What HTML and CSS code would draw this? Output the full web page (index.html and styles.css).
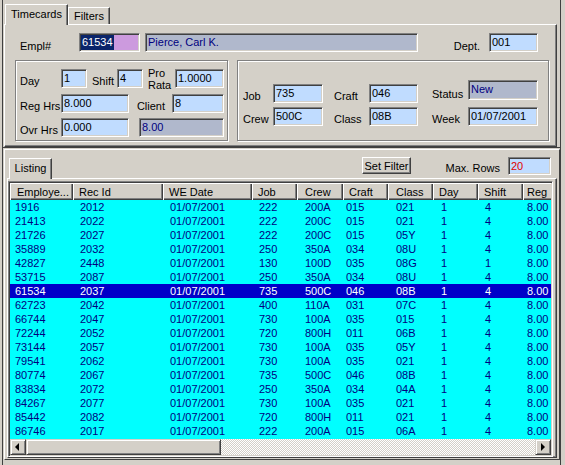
FILE: index.html
```html
<!DOCTYPE html>
<html lang="en">
<head>
    <meta charset="UTF-8">
    <title>Timecards</title>
    <link rel="stylesheet" href="styles.css">
</head>
<body>
<div class="wrap">
    <div class="top">
        <div class="tabctl tabctl-top">
            <div class="tabstrip">
                <div class="tab active tab-timecards">Timecards</div>
                <div class="tab tab-filters">Filters</div>
            </div>
            <div class="page page-main">
                <div class="frow row-emp">
                    <span class="lbl lbl-emp">Empl#</span>
                    <div class="fld fld-purple w61"><span class="seltext">61534</span></div>
                    <div class="fld fld-grey w273 ml5">Pierce, Carl K.</div>
                    <span class="lbl lbl-dept">Dept.</span>
                    <div class="fld w49">001</div>
                </div>
                <div class="groups">
                    <div class="group group-left">
                        <div class="frow">
                            <span class="lbl w41">Day</span>
                            <div class="fld w26">1</div>
                            <span class="lbl w30 pl5">Shift</span>
                            <div class="fld w26">4</div>
                            <span class="lbl lbl-two w32 pl5">Pro<br>Rata</span>
                            <div class="fld w49">1.0000</div>
                        </div>
                        <div class="frow mt6">
                            <span class="lbl w41">Reg Hrs</span>
                            <div class="fld w68">8.000</div>
                            <span class="lbl lbl-client">Client</span>
                            <div class="fld w52">8</div>
                        </div>
                        <div class="frow mt5">
                            <span class="lbl w41">Ovr Hrs</span>
                            <div class="fld w68">0.000</div>
                            <div class="fld fld-grey w85 ml10">8.00</div>
                        </div>
                    </div>
                    <div class="group group-right">
                        <div class="frow">
                            <span class="lbl w30">Job</span>
                            <div class="fld w50">735</div>
                            <span class="lbl w46 pl11">Craft</span>
                            <div class="fld w49">046</div>
                            <span class="lbl lbl-status w50 pl14">Status</span>
                            <div class="fld fld-grey fld-status w70">New</div>
                        </div>
                        <div class="frow mt4">
                            <span class="lbl w30">Crew</span>
                            <div class="fld w50">500C</div>
                            <span class="lbl w46 pl11">Class</span>
                            <div class="fld w49">08B</div>
                            <span class="lbl w50 pl14">Week</span>
                            <div class="fld w70">01/07/2001</div>
                        </div>
                    </div>
                </div>
            </div>
        </div>
    </div>

    <div class="bottom">
        <div class="tabctl tabctl-list">
            <div class="tabstrip-list">
                <div class="tab active tab-listing">Listing</div>
                <div class="btn btn-filter">Set Filter</div>
                <span class="lbl lbl-max">Max. Rows</span>
                <div class="fld fld-max">20</div>
            </div>
            <div class="page page-list">
                <div class="grid">
                    <div class="grid-view">
                        <table>
                            <colgroup>
                                <col style="width:63px"><col style="width:90px"><col style="width:89px">
                                <col style="width:45px"><col style="width:46px"><col style="width:45px">
                                <col style="width:45px"><col style="width:45px"><col style="width:45px">
                                <col style="width:60px">
                            </colgroup>
                            <thead>
                                <tr>
                                    <th>Employe...</th><th>Rec Id</th><th>WE Date</th><th>Job</th><th class="c-crew">Crew</th>
                                    <th>Craft</th><th class="c-crew">Class</th><th>Day</th><th>Shift</th><th class="c-reg">Reg</th>
                                </tr>
                            </thead>
                            <tbody>
                                <tr><td class="c-emp">1916</td><td>2012</td><td>01/07/2001</td><td>222</td><td class="c-crew">200A</td><td class="c-craft">015</td><td class="c-crew">021</td><td class="c-crew">1</td><td>4</td><td class="c-reg">8.00</td></tr>
                                <tr><td class="c-emp">21413</td><td>2022</td><td>01/07/2001</td><td>222</td><td class="c-crew">200C</td><td class="c-craft">015</td><td class="c-crew">021</td><td class="c-crew">1</td><td>4</td><td class="c-reg">8.00</td></tr>
                                <tr><td class="c-emp">21726</td><td>2027</td><td>01/07/2001</td><td>222</td><td class="c-crew">200C</td><td class="c-craft">015</td><td class="c-crew">05Y</td><td class="c-crew">1</td><td>4</td><td class="c-reg">8.00</td></tr>
                                <tr><td class="c-emp">35889</td><td>2032</td><td>01/07/2001</td><td>250</td><td class="c-crew">350A</td><td class="c-craft">034</td><td class="c-crew">08U</td><td class="c-crew">1</td><td>4</td><td class="c-reg">8.00</td></tr>
                                <tr><td class="c-emp">42827</td><td>2448</td><td>01/07/2001</td><td>130</td><td class="c-crew">100D</td><td class="c-craft">035</td><td class="c-crew">08G</td><td class="c-crew">1</td><td>1</td><td class="c-reg">8.00</td></tr>
                                <tr><td class="c-emp">53715</td><td>2087</td><td>01/07/2001</td><td>250</td><td class="c-crew">350A</td><td class="c-craft">034</td><td class="c-crew">08U</td><td class="c-crew">1</td><td>4</td><td class="c-reg">8.00</td></tr>
                                <tr class="sel"><td class="c-emp">61534</td><td>2037</td><td>01/07/2001</td><td>735</td><td class="c-crew">500C</td><td class="c-craft">046</td><td class="c-crew">08B</td><td class="c-crew">1</td><td>4</td><td class="c-reg">8.00</td></tr>
                                <tr><td class="c-emp">62723</td><td>2042</td><td>01/07/2001</td><td>400</td><td class="c-crew">110A</td><td class="c-craft">031</td><td class="c-crew">07C</td><td class="c-crew">1</td><td>4</td><td class="c-reg">8.00</td></tr>
                                <tr><td class="c-emp">66744</td><td>2047</td><td>01/07/2001</td><td>730</td><td class="c-crew">100A</td><td class="c-craft">035</td><td class="c-crew">015</td><td class="c-crew">1</td><td>4</td><td class="c-reg">8.00</td></tr>
                                <tr><td class="c-emp">72244</td><td>2052</td><td>01/07/2001</td><td>720</td><td class="c-crew">800H</td><td class="c-craft">011</td><td class="c-crew">06B</td><td class="c-crew">1</td><td>4</td><td class="c-reg">8.00</td></tr>
                                <tr><td class="c-emp">73144</td><td>2057</td><td>01/07/2001</td><td>730</td><td class="c-crew">100A</td><td class="c-craft">035</td><td class="c-crew">05Y</td><td class="c-crew">1</td><td>4</td><td class="c-reg">8.00</td></tr>
                                <tr><td class="c-emp">79541</td><td>2062</td><td>01/07/2001</td><td>730</td><td class="c-crew">100A</td><td class="c-craft">035</td><td class="c-crew">021</td><td class="c-crew">1</td><td>4</td><td class="c-reg">8.00</td></tr>
                                <tr><td class="c-emp">80774</td><td>2067</td><td>01/07/2001</td><td>735</td><td class="c-crew">500C</td><td class="c-craft">046</td><td class="c-crew">08B</td><td class="c-crew">1</td><td>4</td><td class="c-reg">8.00</td></tr>
                                <tr><td class="c-emp">83834</td><td>2072</td><td>01/07/2001</td><td>250</td><td class="c-crew">350A</td><td class="c-craft">034</td><td class="c-crew">04A</td><td class="c-crew">1</td><td>4</td><td class="c-reg">8.00</td></tr>
                                <tr><td class="c-emp">84267</td><td>2077</td><td>01/07/2001</td><td>730</td><td class="c-crew">100A</td><td class="c-craft">035</td><td class="c-crew">021</td><td class="c-crew">1</td><td>4</td><td class="c-reg">8.00</td></tr>
                                <tr><td class="c-emp">85442</td><td>2082</td><td>01/07/2001</td><td>720</td><td class="c-crew">800H</td><td class="c-craft">011</td><td class="c-crew">021</td><td class="c-crew">1</td><td>4</td><td class="c-reg">8.00</td></tr>
                                <tr><td class="c-emp">86746</td><td>2017</td><td>01/07/2001</td><td>222</td><td class="c-crew">200A</td><td class="c-craft">015</td><td class="c-crew">06A</td><td class="c-crew">1</td><td>4</td><td class="c-reg">8.00</td></tr>
                            </tbody>
                        </table>
                    </div>
                    <div class="hscroll">
                        <div class="sb-btn">
                            <svg width="14" height="14" viewBox="0 0 14 14"><polygon points="8,3 4,7 8,11" fill="#000"/></svg>
                        </div>
                        <div class="sb-thumb"></div>
                        <div class="sb-track"></div>
                        <div class="sb-btn">
                            <svg width="14" height="14" viewBox="0 0 14 14"><polygon points="5,3 9,7 5,11" fill="#000"/></svg>
                        </div>
                    </div>
                </div>
            </div>
        </div>
    </div>
</div>
</body>
</html>
```

FILE: styles.css
```css
body {
    margin: 0;
    background: #d4d0c8;
    font-family: "Liberation Sans", Arial, sans-serif;
    font-size: 11px;
    color: #000;
    overflow: hidden;
}

.wrap {
    box-sizing: border-box;
    width: 559px;
    height: 465px;
    margin-left: 2px;
    border-left: 1px solid #404040;
    border-right: 1px solid #404040;
}

/* top area: Timecards / Filters */
.top {
    box-sizing: border-box;
    height: 148px;
    padding-top: 4px;
    border-bottom: 1px solid #404040;
}
.tabctl-top {
    margin-left: 1px;
    width: 553px;
}
.tabstrip {
    display: flex;
    align-items: flex-end;
    height: 20px;
}
.tab {
    box-sizing: border-box;
    height: 17px;
    border-top: 1px solid #fff;
    border-left: 1px solid #fff;
    border-right: 1px solid #404040;
    box-shadow: inset -1px 0 #808080;
    line-height: 15px;
    text-align: center;
    white-space: nowrap;
}
.tab.active {
    position: relative;
    z-index: 1;
    height: 21px;
    margin-bottom: -1px;
    background: #d4d0c8;
    padding-top: 2px;
}
.tab-timecards {
    width: 63px;
    margin-left: 1px;
}
.tab-filters {
    width: 42px;
    padding-top: 1px;
}

.page {
    box-sizing: border-box;
    border: 1px solid;
    border-color: #fff #404040 #404040 #fff;
    box-shadow: inset -1px -1px #808080;
}
.page-main {
    height: 123px;
    padding: 8px 0 0 15px;
}

.frow {
    display: flex;
    align-items: flex-end;
}
.lbl {
    box-sizing: border-box;
    line-height: 13px;
    white-space: nowrap;
}
.lbl-two {
    line-height: 12px;
    margin-bottom: -3px;
}
.lbl-emp { width: 59px; margin-bottom: -1px; }
.lbl-dept {
    width: 71px;
    padding-right: 9px;
    text-align: right;
    margin-bottom: -1px;
}
.lbl-client {
    width: 43px;
    padding-right: 7px;
    text-align: right;
}
.lbl-status { margin-bottom: 2px; }

.fld {
    box-sizing: border-box;
    height: 19px;
    padding: 1px 0 0 2px;
    border-top: 1px solid #808080;
    border-left: 1px solid #808080;
    border-right: 1px solid #fff;
    border-bottom: 1px solid #fff;
    box-shadow: inset 1px 1px #404040, inset -1px -1px #d4d0c8;
    background: #c0dcff;
    line-height: 15px;
    white-space: nowrap;
    overflow: hidden;
}
.fld-grey {
    background: #b0b8cc;
    color: #000080;
}
.fld-purple {
    background: #cc9ade;
    padding-left: 1px;
}
.seltext {
    display: inline-block;
    padding: 0 1px;
    background: #0a246a;
    color: #fff;
}
.fld-status {
    height: 20px;
    margin-bottom: 3px;
}

.w26 { width: 26px; }
.w30 { width: 30px; }
.w32 { width: 32px; }
.w41 { width: 41px; }
.w46 { width: 46px; }
.w49 { width: 49px; }
.w50 { width: 50px; }
.w52 { width: 52px; }
.w61 { width: 61px; }
.w68 { width: 68px; }
.w70 { width: 70px; }
.w85 { width: 85px; }
.w273 { width: 273px; }
.ml5 { margin-left: 5px; }
.ml10 { margin-left: 10px; }
.pl5 { padding-left: 5px; }
.pl11 { padding-left: 11px; }
.pl14 { padding-left: 14px; }
.mt4 { margin-top: 4px; }
.mt5 { margin-top: 5px; }
.mt6 { margin-top: 6px; }

.groups {
    display: flex;
    gap: 9px;
    margin: 8px 0 0 -5px;
}
.group {
    box-sizing: border-box;
    height: 81px;
    border: 1px solid #808080;
    box-shadow: inset 1px 1px #fff, 1px 1px #fff;
}
.group-left {
    width: 213px;
    padding: 6px 0 0 4px;
}
.group-right {
    width: 312px;
    padding: 19px 0 0 5px;
}

/* bottom area: Listing */
.bottom {
    box-sizing: border-box;
    height: 311px;
    margin: 1px 0 0 1px;
    border: 1px solid;
    border-color: #fff #404040 #404040 #fff;
}
.tabctl-list {
    margin-left: 2px;
    width: 550px;
}
.tabstrip-list {
    display: flex;
    align-items: flex-start;
    height: 28px;
    padding-right: 6px;
}
.tab-listing {
    width: 43px;
    margin: 8px 0 0 2px;
}
.btn {
    box-sizing: border-box;
    border: 1px solid;
    border-color: #fff #404040 #404040 #fff;
    box-shadow: inset -1px -1px #808080;
    text-align: center;
    white-space: nowrap;
}
.btn-filter {
    width: 49px;
    height: 17px;
    margin: 7px 0 0 auto;
    padding-top: 1px;
    line-height: 14px;
}
.lbl-max {
    width: 97px;
    margin-top: 12px;
    padding-right: 8px;
    text-align: right;
}
.fld-max {
    width: 43px;
    height: 18px;
    margin-top: 7px;
    line-height: 14px;
    color: #e00000;
}

.page-list {
    height: 280px;
    padding: 2px 0 0 0;
}
.grid {
    box-sizing: border-box;
    width: 545px;
    padding: 1px;
    border: 1px solid;
    border-color: #808080 #fff #fff #808080;
    box-shadow: inset 1px 1px #404040, inset -1px -1px #d4d0c8;
}
.grid-view {
    height: 256px;
    background: #00ffff;
    overflow: hidden;
}
.grid table {
    border-collapse: collapse;
    table-layout: fixed;
    width: 573px;
}
.grid th {
    padding: 2px 0 0 6px;
    line-height: 15px;
    font-weight: normal;
    text-align: left;
    white-space: nowrap;
    overflow: hidden;
    background: #d4d0c8;
    box-shadow: inset 1px 1px #fff, inset -1px -1px #404040, inset -2px -2px #808080;
}
.grid td {
    padding: 0 0 0 7px;
    line-height: 14px;
    white-space: nowrap;
    overflow: hidden;
    color: #000080;
}
.grid th:first-child { padding-left: 7px; }
.grid td.c-emp { padding-left: 5px; }
.grid .c-crew { padding-left: 8px; }
.grid td.c-craft { padding-left: 3px; }
.grid .c-reg { padding-left: 4px; }
.grid tr.sel td {
    background: #0000c8;
    color: #fff;
}

.hscroll {
    display: flex;
    height: 16px;
}
.sb-btn, .sb-thumb {
    box-sizing: border-box;
    height: 16px;
    border: 1px solid;
    border-color: #d4d0c8 #404040 #404040 #d4d0c8;
    box-shadow: inset 1px 1px #fff, inset -1px -1px #808080;
    background: #d4d0c8;
}
.sb-btn {
    width: 16px;
}
.sb-btn svg {
    display: block;
}
.sb-thumb {
    width: 195px;
}
.sb-track {
    flex: 1;
    background-color: #fff;
    background-image: repeating-conic-gradient(#d4d0c8 0 25%, #fff 0 50%);
    background-size: 2px 2px;
}
```
